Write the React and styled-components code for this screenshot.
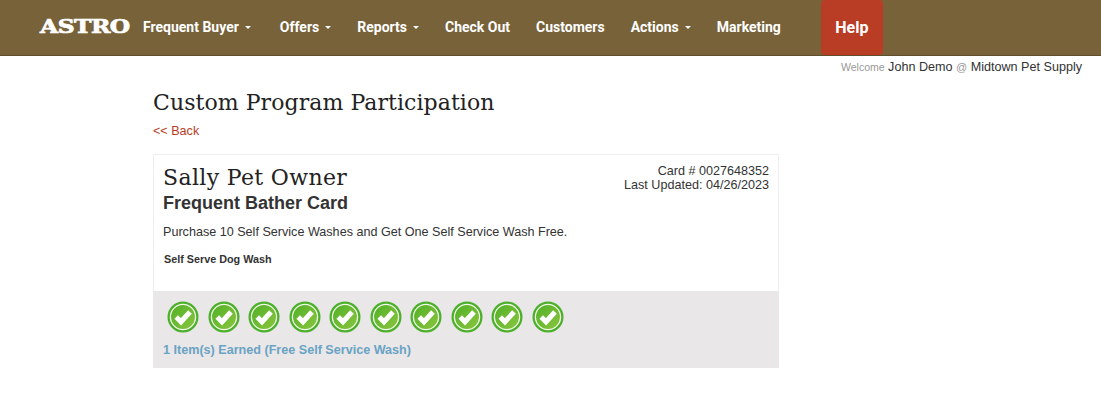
import React from 'react';
import styled, { createGlobalStyle } from 'styled-components';

const GlobalStyle = createGlobalStyle`
  html, body {
    margin: 0;
    padding: 0;
    background: #fff;
    font-family: "Liberation Sans", Arial, sans-serif;
    color: #333;
  }
`;

const links = [
  { label: 'Frequent Buyer', caret: true },
  { label: 'Offers', caret: true },
  { label: 'Reports', caret: true },
  { label: 'Check Out' },
  { label: 'Customers' },
  { label: 'Actions', caret: true },
  { label: 'Marketing' },
];

function CheckBadge() {
  return (
    <svg width="32" height="32" viewBox="0 0 32 32">
      <defs>
        <linearGradient id="badgeFill" x1="0" y1="0" x2="1" y2="1">
          <stop offset="0" stopColor="#4fb026" />
          <stop offset="1" stopColor="#8cc63f" />
        </linearGradient>
      </defs>
      <circle cx="16" cy="16" r="15.5" fill="#4cb02a" />
      <circle cx="16" cy="16" r="12.6" fill="url(#badgeFill)" stroke="#f2f7ea" strokeWidth="1.3" />
      <path d="M9.2 16 L14 20.8 L23 11" fill="none" stroke="#fff" strokeWidth="5" />
    </svg>
  );
}

function App() {
  return (
    <>
      <GlobalStyle />
      <NavBar>
        <Logo>ASTRO</Logo>
        <NavLinks>
          {links.map((link) => (
            <NavLink key={link.label}>
              {link.label}
              {link.caret && <Caret />}
            </NavLink>
          ))}
        </NavLinks>
        <HelpButton>Help</HelpButton>
      </NavBar>
      <WelcomeRow>
        <Muted>Welcome</Muted> John Demo <Muted $large>@</Muted> Midtown Pet Supply
      </WelcomeRow>
      <Main>
        <PageTitle>Custom Program Participation</PageTitle>
        <BackLink>&lt;&lt; Back</BackLink>
        <Card>
          <CardBody>
            <CardHeader>
              <div>
                <CustomerName>Sally Pet Owner</CustomerName>
                <ProgramName>Frequent Bather Card</ProgramName>
              </div>
              <CardMeta>
                Card # 0027648352
                <br />
                Last Updated: 04/26/2023
              </CardMeta>
            </CardHeader>
            <Description>Purchase 10 Self Service Washes and Get One Self Service Wash Free.</Description>
            <ItemName>Self Serve Dog Wash</ItemName>
          </CardBody>
          <CardFooter>
            <Badges>
              {Array.from({ length: 10 }, (_, i) => (
                <CheckBadge key={i} />
              ))}
            </Badges>
            <Earned>1 Item(s) Earned (Free Self Service Wash)</Earned>
          </CardFooter>
        </Card>
      </Main>
    </>
  );
}

const NavBar = styled.header`
  display: flex;
  align-items: stretch;
  height: 55px;
  padding-left: 40px;
  background: #786239;
  border-bottom: 1px solid #5f4d2c;
`;

const Logo = styled.div`
  align-self: center;
  width: 90px;
  margin-top: -2px;
  font-family: "DejaVu Serif", serif;
  font-size: 18px;
  font-weight: 700;
  letter-spacing: -0.4px;
  color: #fff;
  -webkit-text-stroke: 0.7px #fff;
  transform: scaleX(1.3);
  transform-origin: left center;
`;

const NavLinks = styled.nav`
  display: flex;
  align-items: center;
  margin-top: -2px;
`;

const NavLink = styled.a`
  display: flex;
  align-items: center;
  padding: 0 13px;
  font-family: Roboto, sans-serif;
  font-size: 14px;
  font-weight: 700;
  color: #fff;

  &:first-child {
    padding-right: 16px;
  }
`;

const Caret = styled.span`
  width: 0;
  height: 0;
  margin-left: 6px;
  margin-top: 2px;
  border-top: 3px solid #fff;
  border-left: 3px solid transparent;
  border-right: 3px solid transparent;
`;

const HelpButton = styled.a`
  display: flex;
  align-items: center;
  justify-content: center;
  width: 62px;
  height: 55px;
  margin-left: 27px;
  border-radius: 4px;
  background: #b93d25;
  font-family: Roboto, sans-serif;
  font-size: 16px;
  font-weight: 700;
  color: #fff;
`;

const WelcomeRow = styled.div`
  padding: 4px 19px 0 0;
  height: 16px;
  line-height: 15px;
  text-align: right;
  font-size: 12.6px;
  color: #333;
`;

const Muted = styled.span`
  font-size: ${(props) => (props.$large ? '11px' : '10.5px')};
  color: #999;
`;

const Main = styled.main`
  width: 626px;
  margin-left: 153px;
`;

const PageTitle = styled.h1`
  margin: 12px 0 0;
  font-family: "DejaVu Serif", serif;
  font-size: 22px;
  font-weight: 400;
  letter-spacing: 0.07px;
  line-height: 30px;
  color: #222;
`;

const BackLink = styled.a`
  display: block;
  margin-top: 5px;
  font-size: 12.6px;
  line-height: 17px;
  color: #b93d25;
`;

const Card = styled.section`
  margin-top: 14px;
  border: 1px solid #eee;
  border-bottom: 0;
`;

const CardBody = styled.div`
  height: 136px;
  padding: 9px 9px 0;
  box-sizing: border-box;
`;

const CardHeader = styled.div`
  display: flex;
  justify-content: space-between;
`;

const CustomerName = styled.h2`
  margin: 0;
  font-family: "DejaVu Serif", serif;
  font-size: 22px;
  font-weight: 400;
  letter-spacing: 0.35px;
  line-height: 28px;
  color: #222;
`;

const ProgramName = styled.h3`
  margin: 1px 0 0;
  font-size: 18px;
  font-weight: 700;
  line-height: 20px;
  color: #333;
`;

const CardMeta = styled.div`
  font-size: 12.6px;
  line-height: 14px;
  text-align: right;
  color: #333;
`;

const Description = styled.p`
  margin: 11px 0 0;
  font-size: 12.6px;
  line-height: 17px;
  color: #333;
`;

const ItemName = styled.p`
  margin: 11px 0 0 1px;
  font-size: 10.8px;
  font-weight: 700;
  line-height: 15px;
  color: #333;
`;

const CardFooter = styled.div`
  height: 77px;
  margin: 0 -1px;
  padding: 10px 10px 0;
  box-sizing: border-box;
  background: #e9e7e8;
`;

const Badges = styled.div`
  display: flex;
  gap: 8.5px;
  padding-left: 4px;
`;

const Earned = styled.div`
  margin-top: 9px;
  font-size: 12.6px;
  font-weight: 700;
  line-height: 17px;
  color: #69a3c4;
`;

export default App;
